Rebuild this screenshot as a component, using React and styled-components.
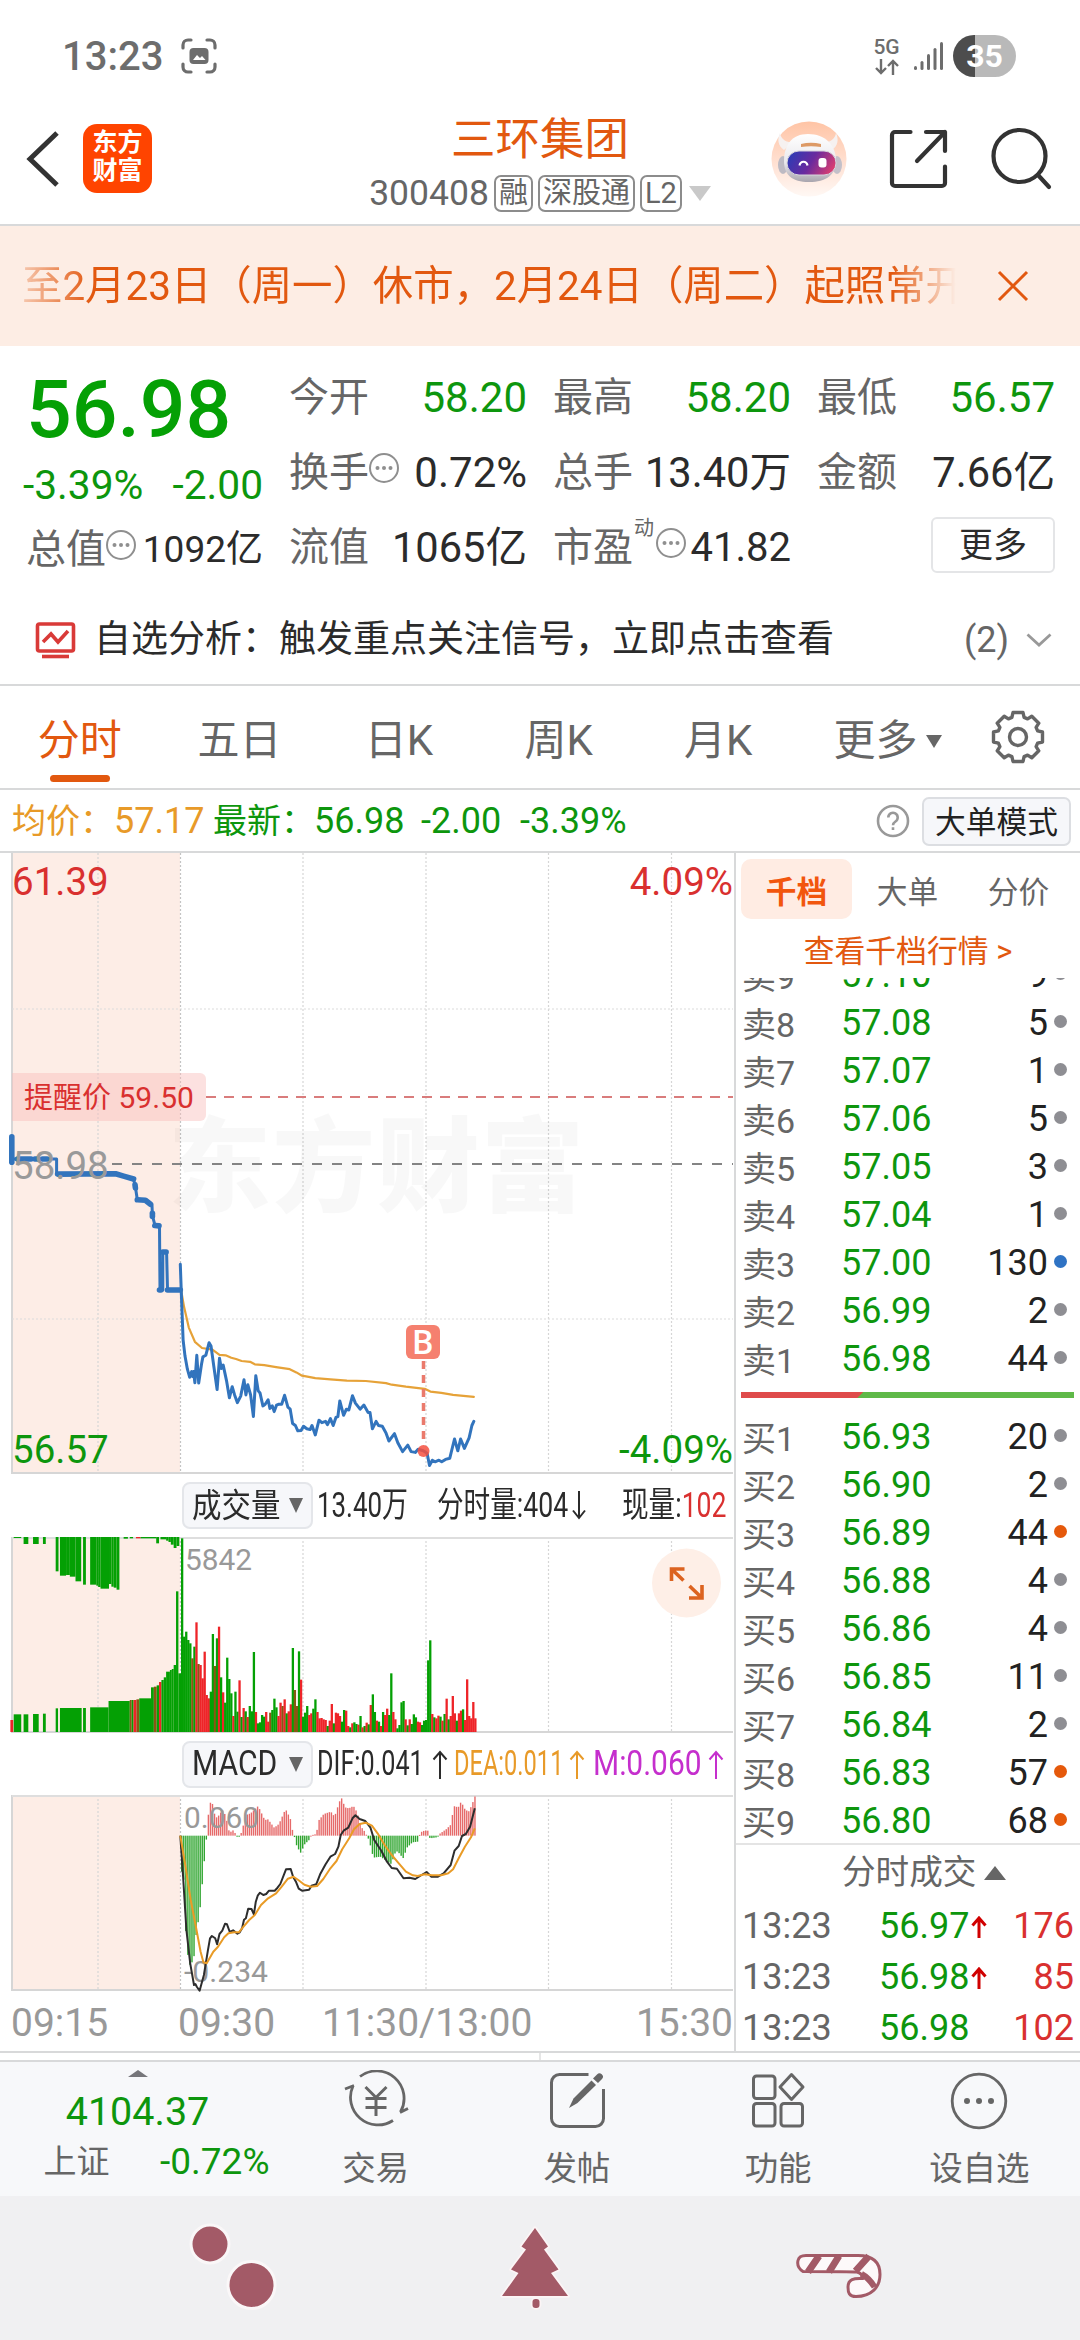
import React from "react";
import styled, { createGlobalStyle, css } from "styled-components";

const GREEN = "#0d960d";
const RED = "#d9302f";
const ORANGE = "#e2580f";
const BLUE = "#3274bd";
const LINE = "#d8d9da";
const GREY = "#666666";

const Global = createGlobalStyle`
  * { box-sizing: border-box; }
  body {
    margin: 0;
    background: #fff;
    color: #2b2b2b;
    font-family: Roboto, "Noto Sans CJK SC", sans-serif;
    font-weight: 400;
  }
  svg { display: block; flex: none; }
`;

const Page = styled.main`
  width: 1080px;
  height: 2340px;
  display: flex;
  flex-direction: column;
  overflow: hidden;
  background: #fff;
  white-space: nowrap;
`;

/* ---------- status bar ---------- */

const StatusBar = styled.div`
  height: 110px;
  flex: none;
  display: flex;
  align-items: center;
  padding: 1px 64px 0 62px;
  color: #6d6d6d;
`;
const Clock = styled.span`
  font-size: 40px;
  font-weight: 500;
  line-height: 48px;
  width: 119px;
  padding-top: 2px;
`;
const StatusRight = styled.div`
  margin-left: auto;
  display: flex;
  align-items: center;
`;
const Network = styled.div`
  width: 27px;
  margin-right: 14px;
  display: flex;
  flex-direction: column;
  align-items: center;
  font-size: 21px;
  font-weight: 500;
  line-height: 20px;
  gap: 2px;
`;
const Battery = styled.div`
  width: 63px;
  height: 42px;
  margin-left: 9px;
  border-radius: 21px;
  background: linear-gradient(90deg, #4d4d4d 0 22px, #b9b9b9 22px);
  color: #fff;
  font-size: 32px;
  font-weight: 700;
  line-height: 43px;
  text-align: center;
`;

/* ---------- header ---------- */

const Header = styled.header`
  height: 116px;
  flex: none;
  display: grid;
  grid-template-columns: 360px 1fr 360px;
  border-bottom: 2px solid ${LINE};
`;
const HeaderSide = styled.div`
  height: 97px;
  display: flex;
  align-items: center;
`;
const HeaderTools = styled(HeaderSide)`
  padding-left: 51px;
  gap: 41px;
`;
const AppLogo = styled.div`
  width: 69px;
  height: 69px;
  margin-left: 22px;
  border-radius: 14px;
  background: #ff4400;
  color: #fff;
  font-size: 25px;
  font-weight: 700;
  line-height: 28px;
  text-align: center;
  padding-top: 5px;
`;
const TitleBlock = styled.div`
  padding-top: 3px;
  display: flex;
  flex-direction: column;
  align-items: center;
`;
const StockName = styled.h1`
  margin: 0;
  font-size: 44.5px;
  font-weight: 400;
  line-height: 54px;
  color: ${ORANGE};
`;
const CodeRow = styled.div`
  height: 52px;
  display: flex;
  align-items: center;
  gap: 5px;
  font-size: 35.5px;
  color: ${GREY};
`;
const Tag = styled.span`
  height: 37px;
  padding: 0 3px;
  border: 2px solid #8c8c8c;
  border-radius: 7px;
  font-size: 29px;
  line-height: 33px;
`;
const Caret = styled.i`
  width: 0;
  height: 0;
  border-left: ${(p) => p.$w / 2}px solid transparent;
  border-right: ${(p) => p.$w / 2}px solid transparent;
  ${(p) =>
    p.$up
      ? css`border-bottom: ${p.$h}px solid ${p.$c};`
      : css`border-top: ${p.$h}px solid ${p.$c};`}
  margin-left: ${(p) => p.$ml || 0}px;
`;

/* ---------- notice ---------- */

const Notice = styled.div`
  height: 120px;
  flex: none;
  display: flex;
  align-items: center;
  justify-content: space-between;
  padding: 0 51px 0 22px;
  background: #fdede4;
`;
const NoticeText = styled.div`
  width: 934px;
  padding-top: 2px;
  overflow: hidden;
  font-size: 40.4px;
  line-height: 60px;
  color: ${ORANGE};
  mask-image: linear-gradient(90deg, rgba(0, 0, 0, 0.25), #000 70px, #000 870px, transparent);
`;

/* ---------- quote ---------- */

const Quote = styled.section`
  height: 240px;
  flex: none;
  padding: 14px 25px 0 26px;
  display: flex;
`;
const QuoteMain = styled.div`
  width: 263px;
  padding-right: 26px;
`;
const LastPrice = styled.div`
  height: 98px;
  font-size: 80.5px;
  line-height: 100px;
  font-weight: 500;
  color: #05a005;
`;
const Change = styled.div`
  height: 54px;
  margin-left: -3px;
  display: flex;
  justify-content: space-between;
  font-size: 40.7px;
  line-height: 54px;
  color: ${GREEN};
`;
const StatGrid = styled.div`
  flex: 1;
  display: grid;
  grid-template-columns: repeat(3, 1fr);
  grid-auto-rows: 75px;
  column-gap: 26px;
`;
const Stat = styled.div`
  height: 75px;
  display: flex;
  align-items: center;
  font-size: 40px;
  line-height: 60px;
  color: ${GREY};
`;
const StatValue = styled.span`
  margin-left: auto;
  font-size: ${(p) => p.$size || 42}px;
  color: ${(p) => (p.$green ? GREEN : "#2b2b2b")};
`;
const Sup = styled.sup`
  font-size: 20px;
  line-height: 22px;
  align-self: flex-start;
  margin: 7px 0 0 1px;
`;
const MoreButton = styled.button`
  justify-self: end;
  width: 124px;
  height: 56px;
  margin-top: 7px;
  padding: 0;
  background: #fff;
  border: 2px solid #e4e5e7;
  border-radius: 6px;
  font: 400 34px/50px Roboto, "Noto Sans CJK SC", sans-serif;
  color: #2b2b2b;
`;

/* ---------- analysis ---------- */

const Analysis = styled.div`
  height: 100px;
  flex: none;
  padding: 9px 28px 0 35px;
  display: flex;
  align-items: center;
  font-size: 37px;
  line-height: 56px;
  border-bottom: 2px solid ${LINE};
`;
const AnalysisText = styled.span`
  margin-left: 18px;
  flex: 1;
`;
const AnalysisCount = styled.span`
  color: ${GREY};
  margin-right: 17px;
  font-size: 36px;
`;

/* ---------- period tabs ---------- */

const Periods = styled.nav`
  height: 104px;
  flex: none;
  display: flex;
  border-bottom: 2px solid ${LINE};
`;
const Period = styled.div`
  width: ${(p) => p.$w || 159.6}px;
  padding-top: 25px;
  display: flex;
  flex-direction: column;
  align-items: center;
  font-size: 42px;
  line-height: 60px;
  color: ${(p) => (p.$on ? ORANGE : GREY)};
  &::after {
    content: "";
    width: 60px;
    height: 7px;
    margin-top: 4px;
    border-radius: 4px;
    background: ${(p) => (p.$on ? ORANGE : "transparent")};
  }
`;
const PeriodMore = styled.span`
  display: flex;
  align-items: center;
`;
const GearCell = styled.div`
  width: 80px;
  display: flex;
  justify-content: center;
  padding-top: 24px;
`;

/* ---------- info line ---------- */

const InfoLine = styled.div`
  height: 63px;
  flex: none;
  display: flex;
  align-items: center;
  padding: 1px 9px 0 12px;
  font-size: 36px;
  line-height: 48px;
  color: ${GREEN};
  border-bottom: 2px solid ${LINE};
`;
const InfoItem = styled.span`
  width: ${(p) => p.$w}px;
  color: ${(p) => p.$c || GREEN};
`;
const InfoLabel = styled(InfoItem)`
  font-size: 34px;
`;
const HelpIcon = styled.svg`
  margin-left: auto;
  margin-right: 11px;
`;
const ModeButton = styled.button`
  width: 149px;
  height: 49px;
  padding: 3px 0 0;
  border: 2px solid #dcdee2;
  border-radius: 7px;
  background: #f6f7fa;
  font: 400 30.7px/42px Roboto, "Noto Sans CJK SC", sans-serif;
  color: #222;
`;

/* ---------- body ---------- */

const Body = styled.div`
  height: 1200px;
  flex: none;
  display: flex;
  border-bottom: 2px solid ${LINE};
`;
const Charts = styled.section`
  width: 736px;
  flex: none;
  border-right: 2px solid ${LINE};
  display: flex;
  flex-direction: column;
`;
const IndicatorBar = styled.div`
  height: ${(p) => p.$h}px;
  flex: none;
  display: flex;
  align-items: center;
  padding-left: 182px;
  font-size: 35px;
  color: #2b2b2b;
`;
const IndicatorPick = styled.div`
  width: 131px;
  height: 47px;
  margin-right: 4px;
  padding: 0 8px 0 8px;
  display: flex;
  align-items: center;
  justify-content: space-between;
  border: 2px solid #e4e6ea;
  border-radius: 8px;
  background: #f6f7fa;
`;
const Slot = styled.span`
  width: ${(p) => p.$w}px;
  height: 44px;
  display: flex;
  align-items: center;
  color: ${(p) => p.$c || "inherit"};
`;
const Squeeze = styled.span`
  display: inline-block;
  transform: scaleX(${(p) => p.$x});
  transform-origin: left center;
  font-size: ${(p) => p.$size || 35}px;
  line-height: 44px;
`;
const RedText = styled.span`
  color: ${RED};
`;
const TimeAxis = styled.div`
  height: 60px;
  display: grid;
  grid-template-columns: 167px 144px 1fr auto;
  padding: 1px 1px 0 11px;
  font-size: 39px;
  line-height: 60px;
  color: #999;
`;

/* ---------- order book ---------- */

const Book = styled.aside`
  flex: 1;
  display: flex;
  flex-direction: column;
  overflow: hidden;
`;
const BookTabs = styled.div`
  height: 66px;
  flex: none;
  padding: 6px 4px 0 5px;
  display: grid;
  grid-template-columns: repeat(3, 111px);
`;
const BookTab = styled.div`
  border-radius: 10px;
  background: ${(p) => (p.$on ? "#ffece3" : "transparent")};
  color: ${(p) => (p.$on ? "#f2560d" : GREY)};
  font-size: 30.7px;
  font-weight: ${(p) => (p.$on ? 700 : 400)};
  line-height: 64px;
  padding-top: 2px;
  height: 60px;
  text-align: center;
`;
const BookLink = styled.div`
  height: 59px;
  flex: none;
  font-size: 30.8px;
  line-height: 66px;
  text-align: center;
  color: ${ORANGE};
`;
const Asks = styled.div`
  height: 414px;
  flex: none;
  overflow: hidden;
  display: flex;
  flex-direction: column;
  justify-content: flex-end;
  padding-bottom: 11px;
`;
const Bids = styled.div`
  height: 445px;
  flex: none;
  padding-top: 13px;
  overflow: hidden;
`;
const Level = styled.div`
  height: 48px;
  flex: none;
  display: grid;
  grid-template-columns: 99px 1fr 86px 27px;
  align-items: center;
  padding-left: 6px;
  font-size: 36px;
  line-height: 48px;
`;
const Side = styled.span`
  font-size: 34px;
  color: ${GREY};
  padding-top: 4px;
`;
const Price = styled.span`
  color: ${GREEN};
`;
const Qty = styled.span`
  text-align: right;
  padding-right: 6px;
  margin-right: -1px;
  color: #222;
`;
const Dot = styled.i`
  width: 13px;
  height: 13px;
  margin: -3px 0 0 1px;
  border-radius: 50%;
  background: ${(p) => p.$c};
`;
const Balance = styled.div`
  height: 6px;
  flex: none;
  margin: 0 6px 0 5px;
  background: linear-gradient(135deg, #df4b4b 0 86px, #5fb948 87px);
`;
const TradesHead = styled.div`
  height: 58px;
  flex: none;
  border-top: 2px solid #e4e4e4;
  padding-left: 106px;
  display: flex;
  align-items: center;
  font-size: 33.6px;
  line-height: 50px;
  color: ${GREY};
`;
const Trade = styled.div`
  height: 51px;
  flex: none;
  display: grid;
  grid-template-columns: 137px 92px 1fr auto;
  align-items: center;
  padding: 0 6px 0 6px;
  font-size: 36px;
  line-height: 51px;
  color: ${GREY};
`;

/* ---------- bottom ---------- */

const Gap = styled.div`
  height: 9px;
  flex: none;
  display: flex;
  justify-content: center;
  border-bottom: 2px solid ${LINE};
  &::before {
    content: "";
    width: 2px;
    background: #e6e6e6;
  }
`;
const BottomBar = styled.nav`
  height: 134px;
  flex: none;
  display: flex;
  background: #f7f8fa;
  color: ${GREY};
`;
const IndexCell = styled.div`
  width: 275px;
  padding-top: 8px;
  display: flex;
  flex-direction: column;
  align-items: center;
  font-size: 39.5px;
  line-height: 50px;
  color: ${GREEN};
`;
const IndexValue = styled.div`
  margin-top: 10px;
`;
const IndexRow = styled.div`
  width: 226px;
  display: flex;
  justify-content: space-between;
  font-size: 37px;
  margin-left: 38px;
`;
const IndexName = styled.span`
  font-size: 33px;
  color: ${GREY};
`;
const Action = styled.div`
  flex: 1;
  padding-top: 8px;
  display: flex;
  flex-direction: column;
  align-items: center;
  font-size: 33.5px;
  line-height: 44px;
  gap: 17px;
`;
const SystemBar = styled.div`
  flex: 1;
  background: #f0f0f2;
  display: grid;
  grid-template-columns: 463px 144px 1fr;
  padding-top: 24px;
`;
const SystemKey = styled.div`
  display: flex;
  justify-content: ${(p) => p.$at || "center"};
  padding: ${(p) => p.$pt || 0}px 0 0 ${(p) => p.$pl || 0}px;
`;

/* ---------- data ---------- */

const asks = [
  ["卖9", "57.10", "9"],
  ["卖8", "57.08", "5"],
  ["卖7", "57.07", "1"],
  ["卖6", "57.06", "5"],
  ["卖5", "57.05", "3"],
  ["卖4", "57.04", "1"],
  ["卖3", "57.00", "130", "#2f73c4"],
  ["卖2", "56.99", "2"],
  ["卖1", "56.98", "44"],
];
const bids = [
  ["买1", "56.93", "20"],
  ["买2", "56.90", "2"],
  ["买3", "56.89", "44", "#e5590b"],
  ["买4", "56.88", "4"],
  ["买5", "56.86", "4"],
  ["买6", "56.85", "11"],
  ["买7", "56.84", "2"],
  ["买8", "56.83", "57", "#e5590b"],
  ["买9", "56.80", "68", "#e5590b"],
];
const trades = [
  ["13:23", "56.97", true, "176"],
  ["13:23", "56.98", true, "85"],
  ["13:23", "56.98", false, "102"],
];

// Series are stored as flat x,y lists on a 1568-unit wide grid.
const KX = 740 / 1568;
const KP = 640 / 1568;
const path = (flat, ky, dy) => {
  let d = "";
  for (let i = 0; i < flat.length; i += 2) {
    d += (i ? "L" : "M") + (flat[i] * KX).toFixed(1) + " " + (flat[i + 1] * ky + dy).toFixed(1);
  }
  return d;
};

const preOpen = [25,703,25,765,28,757,120,757,120,793,245,793,262,799,283,806,287,826,291,856,310,858,322,870,323,896,328,918,338,922,339,1078,345,1078,345,985,353,985,355,1077,382,1077];
const preBold = [
  [25,703,25,765],[37,757,66,757],[74,757,80,757],[90,757,100,757],[122,794,245,793,262,799,283,806],
  [286,820,287,828],[291,857,308,858,319,868],[323,890,323,898],[328,920,337,921],[345,985,352,985],[338,1078,341,1078],[355,1078,382,1078],
];
const priceLine = [382,1015,385,1110,388,1200,392,1240,397,1272,402,1292,406,1278,408,1290,410,1278,413,1305,417,1238,421,1306,427,1260,430,1242,436,1238,443,1207,447,1215,453,1265,460,1322,465,1245,469,1270,473,1262,480,1300,486,1342,492,1315,497,1335,503,1354,510,1338,517,1298,521,1335,525,1310,531,1335,537,1388,542,1288,547,1325,551,1330,557,1362,562,1358,568,1347,572,1368,577,1362,581,1376,586,1360,590,1358,597,1358,603,1336,610,1365,615,1370,620,1405,626,1410,631,1423,638,1422,643,1412,650,1418,657,1420,661,1410,668,1433,676,1397,682,1403,690,1400,694,1408,700,1393,706,1410,712,1390,716,1388,720,1350,728,1385,734,1370,739,1372,747,1337,753,1355,763,1370,771,1360,780,1378,784,1378,789,1418,797,1400,802,1410,810,1412,818,1428,824,1448,836,1430,843,1452,853,1474,864,1458,871,1474,880,1476,886,1468,897,1472,905,1478,910,1508,916,1495,922,1499,930,1495,936,1499,944,1493,953,1490,963,1443,970,1472,976,1443,984,1466,994,1440,1000,1410,1004,1400];
const avgLine = [384,1080,390,1120,400,1170,413,1205,428,1220,450,1224,465,1237,478,1238,490,1244,500,1247,512,1252,530,1254,540,1260,560,1262,585,1267,614,1272,628,1280,640,1288,668,1294,700,1297,735,1300,775,1301,818,1306,830,1310,860,1315,900,1320,912,1327,935,1330,960,1335,1004,1340];

// One entry per minute: top edge of the bar and its direction.
const volume = "205g 500g 485g 510g 520g 565b 530g 457r 582b 585r 625r 545r 675r 685r 665g 492g 588b 505g 470r 622g 667r 698g 563g 627g 670g 738r 665g 725g 631r 741g 714r 724g 741r 708g 724g 546g 726r 760g 757g 735g 740g 726r 755r 728b 720g 686g 712g 738r 698r 708b 688r 730g 724r 703r 534g 660b 708b 544g 629r 740g 728g 708g 735r 730r 716g 688g 726r 745r 744r 748r 750r 768g 752r 702r 760g 728r 730r 738r 755g 720g 722r 768r 772g 760r 757g 762g 764r 738g 772r 768g 758r 763g 705r 673g 726g 752r 755g 768r 726g 735r 716r 735g 610g 726r 748r 775g 765g 697g 693g 748r 766g 748r 762g 733g 742g 755r 757r 765g 752g 750g 571g 511g 732r 742g 745r 737r 740g 752r 732g 686r 748g 738r 678r 730r 752g 730r 722r 718g 750r 628r 738r 745r 696r 745r"
  .split(" ")
  .map((s) => [parseInt(s, 10), s.slice(-1)]);
const barColor = { g: "#04a004", r: "#ee2428", b: "#8a5614" };

// x0, x1, edge height, colour
const preLow = [
  [22,28,750,"r"],[29,45,733,"g"],[50,60,733,"g"],[70,82,732,"g"],[91,97,731,"g"],[118,123,715,"g"],[127,173,714,"g"],[176,182,714,"g"],[191,230,712,"g"],
  [230,275,693,"g"],[275,279,690,"b"],[279,283,690,"g"],[283,289,690,"r"],[289,295,688,"b"],[295,320,685,"g"],[320,326,652,"g"],[326,332,650,"b"],[332,337,646,"g"],
  [337,342,636,"r"],[342,347,630,"g"],[347,352,622,"g"],[352,360,605,"g"],[360,364,600,"g"],[364,368,597,"g"],[368,373,585,"g"],[373,378,364,"g"],[378,384,610,"g"],
];
const preHigh = [
  [29,45,204,"g"],[50,60,222,"g"],[70,82,222,"g"],[91,97,222,"g"],[118,124,304,"g"],[127,140,317,"g"],[140,148,315,"g"],[148,160,320,"g"],[160,172,334,"g"],[176,182,344,"g"],
  [191,204,344,"g"],[204,208,347,"g"],[208,213,351,"g"],[213,231,356,"g"],[231,236,342,"g"],[236,241,350,"g"],[241,247,353,"g"],[247,253,359,"g"],
  [262,271,206,"g"],[275,282,205,"g"],[288,298,205,"r"],[298,331,205,"g"],[331,337,220,"g"],[340,352,208,"g"],[352,357,212,"g"],[357,362,216,"g"],[362,368,224,"g"],[368,374,234,"g"],[374,380,228,"g"],
];

const hist = [384,425,388,430,390,542,394,633,398,688,403,712,407,690,411,675,416,587,420,572,424,520,429,437,433,375,437,316,441,245,446,210,450,225,455,262,460,262,465,250,472,240,478,262,485,308,494,300,500,318,503,323,508,318,512,300,520,255,530,250,546,228,560,270,567,268,580,293,590,282,604,237,614,265,620,310,624,325,628,350,636,368,645,342,654,330,658,316,669,312,675,270,685,252,700,245,708,260,718,215,723,205,730,232,738,235,748,228,756,248,764,290,772,305,776,317,781,330,790,383,805,380,820,395,828,402,838,362,845,370,853,385,862,352,873,337,884,335,887,317,893,304,905,300,910,325,925,322,930,312,945,297,955,283,960,228,970,232,976,215,985,240,993,244,1000,220,1006,197];
const histAt = (x) => {
  for (let i = 2; i < hist.length; i += 2) {
    if (x <= hist[i]) {
      const t = (x - hist[i - 2]) / (hist[i] - hist[i - 2]);
      return hist[i - 1] + t * (hist[i + 1] - hist[i - 1]);
    }
  }
  return hist[hist.length - 1];
};
const dif = [382,317,388,440,395,600,403,700,411,765,414,762,417,770,423,782,432,735,440,665,445,625,449,618,456,625,460,643,465,612,471,602,477,581,481,583,487,606,494,601,503,611,508,607,513,595,517,569,521,565,526,536,533,537,538,553,542,515,546,497,551,488,558,495,564,492,570,482,582,482,588,473,594,462,606,418,616,417,621,440,627,455,633,476,640,482,655,479,660,467,670,463,679,431,690,403,700,380,710,372,717,350,722,315,728,302,738,293,747,265,753,256,762,267,774,273,785,293,793,330,808,362,820,395,830,414,841,416,855,445,868,443,880,447,890,438,904,426,914,440,928,440,940,430,955,405,963,362,972,348,979,318,987,312,996,290,1006,235];
const dea = [382,317,392,400,404,510,415,590,425,665,431,697,438,700,452,665,462,650,475,622,484,610,496,607,506,607,516,590,528,570,540,555,553,525,568,505,585,490,597,470,610,446,622,440,632,450,645,464,658,470,672,468,685,447,700,415,713,393,725,358,740,325,750,298,762,282,775,278,788,287,800,310,815,345,830,375,845,400,860,425,875,436,885,438,900,433,915,436,935,436,950,430,960,418,972,385,985,350,998,322,1006,295];

const gridX = [98, 303, 426, 548.5, 671.5];

/* ---------- pieces ---------- */

const Dots = styled.svg`
  margin: -9px 0 0 ${(p) => p.$ml}px;
`;
const MoreDots = ({ ml = 2 }) => (
  <Dots $ml={ml} width="32" height="32" viewBox="0 0 32 32">
    <circle cx="16" cy="16" r="14" fill="none" stroke="#8f8f8f" strokeWidth="2" />
    {[9.5, 16, 22.5].map((x) => (
      <circle key={x} cx={x} cy="16" r="2" fill="#8f8f8f" />
    ))}
  </Dots>
);

const PlotGrid = ({ h }) => (
  <g>
    <rect x="12" y="0" width="168" height={h} fill="#fdede6" />
    <g stroke="#d6d6d6" strokeWidth="1.2" strokeDasharray="2 2">
      {gridX.map((x) => (
        <line key={x} x1={x} x2={x} y1="0" y2={h} />
      ))}
      <line x1="180.5" x2="180.5" y1="0" y2={h} stroke="#c4c4c4" />
    </g>
    <line x1="12" x2="12" y1="0" y2={h} stroke="#d6d6d6" strokeWidth="2" />
    <line x1="12" x2="733" y1={h - 1} y2={h - 1} stroke="#d6d6d6" strokeWidth="2" />
  </g>
);

const PricePlot = () => (
  <svg width="734" height="621" viewBox="0 0 734 621" fontFamily='Roboto, "Noto Sans CJK SC", sans-serif'>
    <PlotGrid h={621} />
    <text x="168" y="351" fontSize="103" fontWeight="900" fill="#000" fillOpacity="0.028" textLength="416">东方财富</text>
    <g stroke="#dcdcdc" strokeWidth="1.2" strokeDasharray="2 2">
      <line x1="12" x2="733" y1="156" y2="156" />
      <line x1="12" x2="733" y1="466" y2="466" />
    </g>
    <line x1="206" x2="733" y1="244" y2="244" stroke="#d97c7c" strokeWidth="2" strokeDasharray="10 8" />
    <line x1="112" x2="733" y1="311" y2="311" stroke="#848484" strokeWidth="2" strokeDasharray="10 10" />
    <path d="M12 220h188a6 6 0 0 1 6 6v36a6 6 0 0 1-6 6H12z" fill="#f9bdbb" fillOpacity="0.45" />
    <text x="24" y="254.5" fontSize="29" fill={RED}>提醒价 <tspan x="118.5" fontSize="30">59.50</tspan></text>
    <g fill="none" strokeLinejoin="round" strokeLinecap="round">
      <path d={path(preOpen, KP, -3)} stroke={BLUE} strokeWidth="3" />
      {preBold.map((seg, i) => (
        <path key={i} d={path(seg, KP, -3)} stroke={BLUE} strokeWidth="5.6" />
      ))}
      <path d={path(avgLine, KP, -3)} stroke="#e6a238" strokeWidth="2.2" />
      <path d={path(priceLine, KP, -3)} stroke={BLUE} strokeWidth="3" />
    </g>
    <line x1="423.5" x2="423.5" y1="508" y2="592" stroke="#ea7a6c" strokeWidth="3.5" strokeDasharray="8 6" />
    <circle cx="423.5" cy="598" r="6" fill="#f4503f" fillOpacity="0.85" />
    <rect x="406" y="472" width="34" height="34" rx="6" fill="#f5806f" />
    <text x="423" y="500.5" fontSize="33" fontWeight="500" fill="#fff" textAnchor="middle">B</text>
    <g fontSize="38.5">
      <text x="12" y="42" fill={RED}>61.39</text>
      <text x="733" y="42" fill={RED} textAnchor="end">4.09%</text>
      <text x="12" y="326" fill="#999">58.98</text>
      <text x="12" y="610" fill={GREEN}>56.57</text>
      <text x="733" y="610" fill={GREEN} textAnchor="end">-4.09%</text>
    </g>
  </svg>
);

const VolumePlot = () => {
  const y = (v) => v / 3 - 67;
  return (
    <svg width="734" height="196" viewBox="0 0 734 196" fontFamily="Roboto, sans-serif">
      <PlotGrid h={196} />
      <line x1="12" x2="733" y1="1" y2="1" stroke="#dedede" strokeWidth="2" />
      {preLow.map(([a, b, t, c], i) => (
        <rect key={i} x={a * KX} width={(b - a) * KX} y={y(t)} height={195 - y(t)} fill={barColor[c]} />
      ))}
      {preHigh.map(([a, b, t, c], i) => (
        <rect key={i} x={a * KX} width={(b - a) * KX} y="0" height={y(t)} fill={barColor[c]} />
      ))}
      {volume.map(([t, c], i) => (
        <rect key={i} x={(383.5 + i * 4.345) * KX} width="2.3" y={y(t)} height={195 - y(t)} fill={barColor[c]} />
      ))}
      <text x="185" y="33" fontSize="30" fill="#999" textLength="67" lengthAdjust="spacingAndGlyphs">5842</text>
      <circle cx="686.5" cy="46" r="34.5" fill="#feefe7" />
      <g fill="none" stroke="#dc6320" strokeWidth="3.6">
        <path d="M671.5 44V32h13M672 32.5l11.5 11" />
        <path d="M702 48v13h-13M701.5 60.5l-12-11.5" />
      </g>
    </svg>
  );
};

const MacdPlot = () => {
  const zero = 317 / 3 - 65;
  return (
    <svg width="734" height="197" viewBox="0 0 734 197" fontFamily="Roboto, sans-serif">
      <PlotGrid h={196} />
      <line x1="12" x2="733" y1="1" y2="1" stroke="#dedede" strokeWidth="2" />
      {volume.map((_, i) => {
        const x = 384 + i * 4.345;
        const v = histAt(x) / 3 - 65;
        return (
          <rect
            key={i}
            x={x * KX - 0.2}
            width="1.4"
            y={Math.min(v, zero)}
            height={Math.max(Math.abs(v - zero), 1)}
            fill={v > zero ? "#2fa52f" : "#e66a6a"}
          />
        );
      })}
      <g fontSize="30" fill="#999">
        <text x="184" y="33" textLength="75" lengthAdjust="spacingAndGlyphs">0.060</text>
        <text x="184" y="187" textLength="84" lengthAdjust="spacingAndGlyphs">-0.234</text>
      </g>
      <g fill="none" strokeWidth="2" strokeLinejoin="round">
        <path d={path(dif, 1 / 3, -65)} stroke="#2d2d2d" />
        <path d={path(dea, 1 / 3, -65)} stroke="#e99b26" />
      </g>
    </svg>
  );
};

const VArrow = ({ color, down, size = 29, w = 2 }) => (
  <svg width="16" height={size} viewBox={`0 0 16 ${size}`} fill="none" stroke={color} strokeWidth={w}>
    <path
      d={
        down
          ? `M8 0V${size - 2}M2 ${size - 9.5}L8 ${size - 2}l6-7.5`
          : `M8 ${size}V2M1.5 9.5L8 2l6.5 7.5`
      }
    />
  </svg>
);

const Robot = () => (
  <svg width="76" height="76" viewBox="0 0 76 76">
    <defs>
      <linearGradient id="halo" x1="0" y1="0" x2="0" y2="1">
        <stop offset="0" stopColor="#ffc4a5" />
        <stop offset="0.6" stopColor="#ffe3d6" />
        <stop offset="1" stopColor="#fff8f4" />
      </linearGradient>
      <linearGradient id="visor" x1="0" y1="0.3" x2="1" y2="0.6">
        <stop offset="0" stopColor="#2d3bb5" />
        <stop offset="0.5" stopColor="#6a2a9e" />
        <stop offset="1" stopColor="#dc3f70" />
      </linearGradient>
      <linearGradient id="shell" x1="0" y1="0" x2="0" y2="1">
        <stop offset="0" stopColor="#ffffff" />
        <stop offset="0.6" stopColor="#e9e8ec" />
        <stop offset="1" stopColor="#a9a5ae" />
      </linearGradient>
    </defs>
    <circle cx="38" cy="38" r="37.5" fill="url(#halo)" />
    <ellipse cx="12" cy="44" rx="5" ry="9" fill="#bdbac3" />
    <ellipse cx="66" cy="44" rx="5" ry="9" fill="#c3c0c9" />
    <path d="M9 12c-3 6-2 13 4 17l9-8c-7 1-12-3-13-9zM65 12c3 6 2 13-4 17l-9-8c7 1 12-3 13-9z" fill="#f6f1f0" />
    <path d="M37 13c17 0 28 11 28 27 0 14-10 21-27 21S13 54 13 40c0-16 8-27 24-27z" fill="url(#shell)" />
    <rect x="16" y="30" width="49" height="24" rx="12" fill="url(#visor)" stroke="#d6d3dc" strokeWidth="1" />
    <path d="M30 23q10-2.500 20 0v3q-10-1.500-20 0z" fill="#dd9a66" />
    <path d="M28.500 44.500c1-5 7-5 8 0" fill="none" stroke="#fff" strokeWidth="2.200" />
    <rect x="47.500" y="37" width="8" height="9.500" rx="3" fill="#fff" />
  </svg>
);

const Levels = ({ rows }) =>
  rows.map(([side, price, qty, color = "#8e8e93"]) => (
    <Level key={side}>
      <Side>{side}</Side>
      <Price>{price}</Price>
      <Qty>{qty}</Qty>
      <Dot $c={color} />
    </Level>
  ));

const GearIcon = () => {
  const pts = [];
  for (let i = 0; i < 8; i++) {
    const a = (i * Math.PI) / 4 - Math.PI / 2;
    [[-0.3, 20.5], [-0.2, 25], [0.2, 25], [0.3, 20.5]].forEach(([o, r]) =>
      pts.push(`${(27 + r * Math.cos(a + o)).toFixed(1)},${(27 + r * Math.sin(a + o)).toFixed(1)}`)
    );
  }
  return (
    <svg width="54" height="54" viewBox="0 0 54 54" fill="none" stroke={GREY} strokeWidth="3.4" strokeLinejoin="round">
      <polygon points={pts.join(" ")} />
      <circle cx="27" cy="27" r="8.5" />
    </svg>
  );
};

export default function App() {
  return (
    <Page>
      <Global />

      <StatusBar>
        <Clock>13:23</Clock>
        <svg width="36" height="36" viewBox="0 0 36 36" fill="none" stroke="#6d6d6d" strokeWidth="3.2" strokeLinecap="round">
          <path d="M2 10V7a5 5 0 0 1 5-5h3M26 2h3a5 5 0 0 1 5 5v3M34 26v3a5 5 0 0 1-5 5h-3M10 34H7a5 5 0 0 1-5-5v-3" />
          <rect x="8.5" y="10" width="19" height="16" rx="4" fill="#6d6d6d" stroke="none" />
          <path d="M12 22l4-5 3 3 2-2 3.5 4z" fill="#fff" stroke="none" />
        </svg>
        <StatusRight>
          <Network>
            5G
            <svg width="26" height="16" viewBox="0 0 26 16" fill="none" stroke="#6d6d6d" strokeWidth="2.4">
              <path d="M7 0v14M2 9l5 5 5-5M19 16V2M14 7l5-5 5 5" />
            </svg>
          </Network>
          <svg width="30" height="30" viewBox="0 0 30 30" fill="#6d6d6d">
            <rect x="0" y="25" width="3" height="4" rx="1.5" />
            <rect x="6.5" y="20" width="3" height="9" rx="1.5" />
            <rect x="13" y="13" width="3" height="16" rx="1.5" />
            <rect x="19.5" y="7" width="3" height="22" rx="1.5" />
            <rect x="26" y="1" width="3" height="28" rx="1.5" />
          </svg>
          <Battery>35</Battery>
        </StatusRight>
      </StatusBar>

      <Header>
        <HeaderSide>
          <svg width="61" height="60" viewBox="0 0 61 60" fill="none" stroke="#333" strokeWidth="5">
            <path d="M57 4L30 30l27 26" />
          </svg>
          <AppLogo>东方<br />财富</AppLogo>
        </HeaderSide>
        <TitleBlock>
          <StockName>三环集团</StockName>
          <CodeRow>
            300408
            <Tag>融</Tag>
            <Tag>深股通</Tag>
            <Tag>L2</Tag>
            <Caret $w={22} $h={15} $c="#c9c9c9" $ml={2} />
          </CodeRow>
        </TitleBlock>
        <HeaderTools>
          <Robot />
          <svg width="62" height="62" viewBox="0 0 62 62" fill="none" stroke="#333" strokeWidth="4.2" strokeLinecap="round" strokeLinejoin="round">
            <path d="M22.5 4H7a3 3 0 0 0-3 3v48a3 3 0 0 0 3 3h47a3 3 0 0 0 3-3V38.5M38 4h19v19M57 4L29 33" />
          </svg>
          <svg width="64" height="64" viewBox="0 0 64 64" fill="none" stroke="#333" strokeWidth="4.2" strokeLinecap="round">
            <circle cx="28.5" cy="29" r="26" />
            <path d="M47 48l11 12" />
          </svg>
        </HeaderTools>
      </Header>

      <Notice>
        <NoticeText>至2月23日（周一）休市，2月24日（周二）起照常开市</NoticeText>
        <svg width="32" height="32" viewBox="0 0 32 32" stroke={ORANGE} strokeWidth="3">
          <path d="M2 2l28 28M30 2L2 30" />
        </svg>
      </Notice>

      <Quote>
        <QuoteMain>
          <LastPrice>56.98</LastPrice>
          <Change>
            <span>-3.39%</span>
            <span>-2.00</span>
          </Change>
          <Stat>
            总值<MoreDots ml={-1} />
            <StatValue $size={37}>1092亿</StatValue>
          </Stat>
        </QuoteMain>
        <StatGrid>
          <Stat>今开<StatValue $green>58.20</StatValue></Stat>
          <Stat>最高<StatValue $green>58.20</StatValue></Stat>
          <Stat>最低<StatValue $green>56.57</StatValue></Stat>
          <Stat>换手<MoreDots ml={-1} /><StatValue>0.72%</StatValue></Stat>
          <Stat>总手<StatValue $size={41.6}>13.40万</StatValue></Stat>
          <Stat>金额<StatValue $size={41.6}>7.66亿</StatValue></Stat>
          <Stat>流值<StatValue $size={41.6}>1065亿</StatValue></Stat>
          <Stat>市盈<Sup>动</Sup><MoreDots ml={1} /><StatValue $size={40}>41.82</StatValue></Stat>
          <MoreButton>更多</MoreButton>
        </StatGrid>
      </Quote>

      <Analysis>
        <svg width="41" height="38" viewBox="0 0 41 38" fill="none" stroke="#d93a38" strokeWidth="3.6">
          <rect x="2.5" y="3" width="36" height="27" rx="2" />
          <path d="M8 21l8-8 7 8 10-11" />
          <path d="M7 35.5h27" />
        </svg>
        <AnalysisText>自选分析：触发重点关注信号，立即点击查看</AnalysisText>
        <AnalysisCount>(2)</AnalysisCount>
        <svg width="26" height="16" viewBox="0 0 26 16" fill="none" stroke="#999" strokeWidth="2.8">
          <path d="M1.5 2.5L13 13 24.5 2.5" />
        </svg>
      </Analysis>

      <Periods>
        <Period $on>分时</Period>
        <Period>五日</Period>
        <Period>日K</Period>
        <Period>周K</Period>
        <Period>月K</Period>
        <Period $w={180}>
          <PeriodMore>更多<Caret $w={16} $h={13} $c={GREY} $ml={9} /></PeriodMore>
        </Period>
        <GearCell><GearIcon /></GearCell>
      </Periods>

      <InfoLine>
        <InfoLabel $w={102} $c="#e89a28">均价：</InfoLabel>
        <InfoItem $w={99} $c="#e89a28">57.17</InfoItem>
        <InfoLabel $w={101}>最新：</InfoLabel>
        <InfoItem $w={107}>56.98</InfoItem>
        <InfoItem $w={99}>-2.00</InfoItem>
        <InfoItem>-3.39%</InfoItem>
        <HelpIcon width="36" height="36" viewBox="0 0 36 36" fill="none" stroke="#999" strokeWidth="2.6">
          <circle cx="18" cy="18" r="15" />
          <path d="M13.3 14.5a4.7 4.7 0 1 1 7.2 4c-1.6 1.1-2.5 1.8-2.500 3.700M18 24.300v2.700" />
        </HelpIcon>
        <ModeButton>大单模式</ModeButton>
      </InfoLine>

      <Body>
        <Charts>
          <PricePlot />
          <IndicatorBar $h={63}>
            <IndicatorPick>
              <Slot $w={90}><Squeeze $x={0.88} $size={33.5}>成交量</Squeeze></Slot>
              <Caret $w={15} $h={15} $c={GREY} />
            </IndicatorPick>
            <Slot $w={120}><Squeeze $x={0.74}>13.40万</Squeeze></Slot>
            <Slot $w={134}><Squeeze $x={0.76}>分时量:404</Squeeze></Slot>
            <Slot $w={51}><VArrow color="#2b2b2b" down /></Slot>
            <Slot $w={106}><Squeeze $x={0.76}>现量:<RedText>102</RedText></Squeeze></Slot>
          </IndicatorBar>
          <VolumePlot />
          <IndicatorBar $h={62}>
            <IndicatorPick>
              <Slot $w={90}><Squeeze $x={0.86}>MACD</Squeeze></Slot>
              <Caret $w={15} $h={15} $c={GREY} />
            </IndicatorPick>
            <Slot $w={115}><Squeeze $x={0.72}>DIF:0.041</Squeeze></Slot>
            <Slot $w={22}><VArrow color="#2b2b2b" /></Slot>
            <Slot $w={115} $c="#e89a28"><Squeeze $x={0.675}>DEA:0.011</Squeeze></Slot>
            <Slot $w={24}><VArrow color="#e89a28" /></Slot>
            <Slot $w={115} $c="#c52fcd"><Squeeze $x={0.855}>M:0.060</Squeeze></Slot>
            <Slot $w={16}><VArrow color="#c52fcd" /></Slot>
          </IndicatorBar>
          <MacdPlot />
          <TimeAxis>
            <span>09:15</span>
            <span>09:30</span>
            <span>11:30/13:00</span>
            <span>15:30</span>
          </TimeAxis>
        </Charts>

        <Book>
          <BookTabs>
            <BookTab $on>千档</BookTab>
            <BookTab>大单</BookTab>
            <BookTab>分价</BookTab>
          </BookTabs>
          <BookLink>查看千档行情 &gt;</BookLink>
          <Asks><Levels rows={asks} /></Asks>
          <Balance />
          <Bids><Levels rows={bids} /></Bids>
          <TradesHead>
            分时成交
            <Caret $up $w={22} $h={14} $c={GREY} $ml={8} />
          </TradesHead>
          {trades.map(([time, price, up, qty], i) => (
            <Trade key={i}>
              <span>{time}</span>
              <Price>{price}</Price>
              <span>{up && <VArrow color="#d00000" size={22} w={3} />}</span>
              <RedText>{qty}</RedText>
            </Trade>
          ))}
        </Book>
      </Body>

      <Gap />

      <BottomBar>
        <IndexCell>
          <Caret $up $w={21} $h={7} $c="#76767a" />
          <IndexValue>4104.37</IndexValue>
          <IndexRow>
            <IndexName>上证</IndexName>
            <span>-0.72%</span>
          </IndexRow>
        </IndexCell>
        <Action>
          <svg width="66" height="60" viewBox="0 0 66 60" fill="none" stroke={GREY} strokeWidth="2.8">
            <path d="M17 6.5A27.5 27.5 0 0 1 57.500 42M57 42.500l8-4M50 50.500A27.500 27.500 0 0 1 10 16M11 15.500l-9 3.500" />
            <path d="M22.5 17L33 27.5 43.5 17M33 27v19M22.5 28.5h21M22.5 37.5h21" strokeWidth="3" />
          </svg>
          交易
        </Action>
        <Action>
          <svg width="60" height="60" viewBox="0 0 60 60" fill="none" stroke={GREY} strokeWidth="3">
            <path d="M41.5 4.5H12.5a8 8 0 0 0-8 8v36a8 8 0 0 0 8 8h36a8 8 0 0 0 8-8V19" />
            <path d="M22 38l4.5-9.5L44.5 10.5l4.5 4.5-18.5 18z" fill={GREY} stroke="none" />
            <path d="M46 8.5l4-4a3.2 3.2 0 0 1 5 4.5l-4 4z" fill={GREY} stroke="none" />
          </svg>
          发帖
        </Action>
        <Action>
          <svg width="60" height="60" viewBox="0 0 60 60" fill="none" stroke={GREY} strokeWidth="3">
            <rect x="5.5" y="6" width="21.5" height="22.5" rx="3" />
            <path d="M43.5 4.5L55 17 43.5 29.5 32 17z" strokeLinejoin="round" />
            <rect x="5.5" y="33.5" width="21.5" height="22.5" rx="3" />
            <rect x="33" y="33.5" width="21.5" height="22.5" rx="3" />
          </svg>
          功能
        </Action>
        <Action>
          <svg width="60" height="60" viewBox="0 0 60 60" fill="none" stroke={GREY} strokeWidth="2.8">
            <circle cx="30" cy="31" r="26.8" />
            {[18, 30, 42].map((x) => (
              <circle key={x} cx={x} cy="31" r="3" fill={GREY} stroke="none" />
            ))}
          </svg>
          设自选
        </Action>
      </BottomBar>

      <SystemBar>
        <SystemKey $at="flex-start" $pl={186}>
          <svg width="94" height="92" viewBox="0 0 94 92" fill="#a35a67" stroke="#faf7f8" strokeWidth="3">
            <circle cx="24" cy="24" r="19" />
            <circle cx="65.5" cy="65" r="23.5" />
          </svg>
        </SystemKey>
        <SystemKey>
          <svg width="74" height="90" viewBox="0 0 74 90" fill="#a35a67" stroke="#fcf5f6" strokeWidth="3.5" strokeLinejoin="round" paintOrder="stroke">
            <path d="M37 8l13 18.5-4 3 14.5 20-7.5 3.5L70 76H4l16.500-23-7.500-3.500 15-20-4.500-3z" />
            <rect x="34.5" y="79" width="7" height="9" rx="3" />
          </svg>
        </SystemKey>
        <SystemKey $at="flex-start" $pl={188} $pt={16}>
          <svg width="90" height="80" viewBox="0 0 90 80" fill="#fdf9fa" stroke="#a35a67" strokeWidth="3">
            <path d="M8 35.5C4 33 2 29 3 24.5 4 20 7 19.500 11 19.500h52c14 0 22 6 22 19 0 13-9 22-24 22-7 0-8-4-8-9.500 0-8 6-9 14.500-8.500.5-3-1-5-5.500-6.500-7-.5-48-.5-54-.5z" />
            <path d="M24 20L13 36M44 20L34 36M74 20L60.5 35" strokeWidth="7" />
            <path d="M66.5 38Q74 42 79.5 51" strokeWidth="6" />
          </svg>
        </SystemKey>
      </SystemBar>
    </Page>
  );
}
